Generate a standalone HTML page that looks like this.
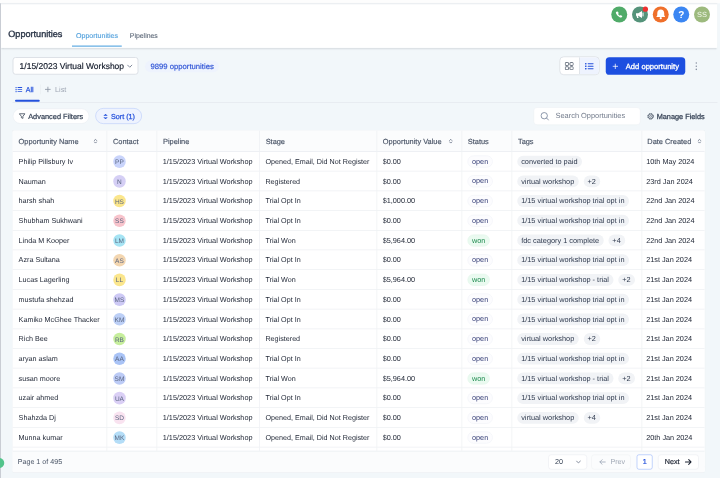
<!DOCTYPE html>
<html lang="en"><head><meta charset="utf-8"><title>Opportunities</title>
<style>
*{box-sizing:border-box;margin:0;padding:0}
html,body{width:720px;height:478px;overflow:hidden;background:#f2f7fa}
body{font-family:"Liberation Sans",sans-serif;color:#101828;-webkit-font-smoothing:antialiased;text-rendering:geometricPrecision}
#wc{position:absolute;left:0;top:0;width:720px;height:478px;overflow:hidden;will-change:transform}
#sc{position:absolute;left:0;top:0;width:2880px;height:1912px;transform:scale(.25);transform-origin:0 0}
#app{zoom:4;position:relative;width:720px;height:478px;overflow:hidden;background:#f2f7fa}
.abs{position:absolute}
.topstrip{position:absolute;left:0;top:0;width:720px;height:3.3px;background:#fdfdfd}
.leftbar{position:absolute;left:0;top:3.3px;width:1px;height:475px;background:#c9cdd4}
.hdr{position:absolute;left:1px;top:3.3px;width:716.2px;height:44.4px;background:#fff;border-top:1px solid #e8eaee;box-shadow:0 .8px 1.6px rgba(16,24,40,.15)}
.ic{position:absolute;top:6.4px;width:16px;height:16px;border-radius:50%}
.ic svg{position:absolute;left:0;top:0}
.title{position:absolute;left:8.3px;top:28.2px;font-size:9.1px;line-height:12px;color:#2b3648;-webkit-text-stroke:.35px #2b3648;white-space:nowrap}
.tab1{position:absolute;left:76px;top:30.3px;font-size:7.05px;line-height:10px;color:#4f9fdc;-webkit-text-stroke:.12px #4f9fdc;white-space:nowrap}
.tab1u{position:absolute;left:72px;top:45.6px;width:49.8px;height:1.1px;background:#66aee4}
.tab2{position:absolute;left:129.8px;top:30.5px;font-size:6.9px;line-height:10px;color:#5d6878;-webkit-text-stroke:.1px #5d6878;white-space:nowrap}
.dd{position:absolute;left:12.5px;top:57px;width:126px;height:17.8px;background:#fff;border:1px solid #dde1e7;border-radius:3px}
.dd span{position:absolute;left:6.1px;top:2.3px;font-size:8.49px;line-height:11px;color:#101828;-webkit-text-stroke:.15px #101828;white-space:nowrap}
.badge{position:absolute;left:145px;top:60.5px;width:74px;height:11.8px;border-radius:6px;background:#eef3fd}
.badge span{position:absolute;left:5.5px;top:1.4px;font-size:7.69px;line-height:9px;color:#2c51d6;-webkit-text-stroke:.15px #2c51d6;white-space:nowrap}
.tog{position:absolute;left:559.2px;top:56.3px;width:40.6px;height:18.9px;border:1px solid #e0e4e9;border-radius:4.5px;background:#fff;overflow:hidden}
.tog .r{position:absolute;left:18.9px;top:0;width:20px;height:17px;background:#eef3fe;border-left:1px solid #e0e4e9}
.addb{position:absolute;left:605.8px;top:57.3px;width:79.5px;height:17.5px;border-radius:3.6px;background:#1d4fe0}
.addb span{position:absolute;left:20px;top:4.6px;font-size:7.59px;line-height:9px;color:#fff;-webkit-text-stroke:.3px #fff;white-space:nowrap}
.t-all{position:absolute;left:25.8px;top:84.8px;font-size:7.01px;line-height:9px;color:#2451dc;-webkit-text-stroke:.25px #2451dc;white-space:nowrap}
.t-allu{position:absolute;left:15px;top:99.7px;width:24.7px;height:2.1px;background:#2451dc;border-radius:1px}
.t-sep{position:absolute;left:40.4px;top:84.6px;width:.7px;height:9.6px;background:#e6eaef}
.t-list{position:absolute;left:55px;top:85px;font-size:7.25px;line-height:9px;color:#a0a8b5;white-space:nowrap}
.hline{position:absolute;left:12.5px;top:102.1px;width:705px;height:.8px;background:#e8ecf1}
.advf{position:absolute;left:12.8px;top:108.4px;width:76.5px;height:15.3px;border-radius:7.7px;background:#fff;border:.7px solid #e7ebf0}
.advf span{position:absolute;left:14.9px;top:3.4px;font-size:7.38px;line-height:9px;color:#344054;-webkit-text-stroke:.2px #344054;white-space:nowrap}
.sortb{position:absolute;left:95.2px;top:108px;width:46.7px;height:16px;border-radius:8px;background:#eef3fe;border:.8px solid #c4d4fb}
.sortb span{position:absolute;left:15px;top:3.2px;font-size:7.2px;line-height:9px;color:#2451dc;-webkit-text-stroke:.25px #2451dc;white-space:nowrap}
.search{position:absolute;left:533.5px;top:107.3px;width:107.1px;height:17.7px;border-radius:3.5px;background:#fff;border:.6px solid #ebeef2}
.search span{position:absolute;left:21.5px;top:3.8px;font-size:7.42px;line-height:9px;color:#737c8c;white-space:nowrap}
.mng{position:absolute;left:656.7px;top:111.7px;font-size:7.32px;line-height:9px;color:#344054;-webkit-text-stroke:.25px #344054;white-space:nowrap}
/* table */
.tbl{position:absolute;left:12.5px;top:130.6px;width:692.2px;height:341.6px;background:#fff;overflow:hidden;border-radius:1.5px;box-shadow:0 0 0 .4px #e9edf1}
.thead{position:absolute;left:0;top:0;width:100%;height:21.2px;background:#fbfcfd;border-bottom:.8px solid #eaedf1}
.th{position:absolute;top:0;height:21.2px;border-left:.8px solid #eef0f3;padding-left:5.6px;font-size:7.4px;line-height:21.4px;color:#4a5567;-webkit-text-stroke:.15px #4a5567;white-space:nowrap}
.th.c0{border-left:none;padding-left:6.1px}
.th .srt{position:absolute;top:8px}
.th.c0 .srt{left:81px}
.th.c4 .srt{left:71.5px}
.th.c7 .srt{left:55.3px}
.tr{position:absolute;left:0;width:100%;height:19.71px;border-bottom:.8px solid #eef0f3}
.td{position:absolute;top:0;height:19.71px;border-left:.8px solid #eff1f4;padding-left:5.4px;font-size:7.3px;line-height:19.9px;color:#1d2433;white-space:nowrap;overflow:hidden}
.td.c0{border-left:none;padding-left:6.1px}
.td.c3{font-size:7.17px}
.td.c0{font-size:7.2px}
.av{position:absolute;left:5.8px;top:3.55px;width:12.6px;height:12.6px;border-radius:50%;font-size:6.5px;line-height:13px;text-align:center;color:#5a6680}
.st{position:absolute;left:5.3px;top:3.8px;height:12px;width:25.1px;border-radius:6px;border:.7px solid #eff1f6;background:#fcfcfe;font-size:7.28px;line-height:10.6px;text-align:center;color:#3a437a}
.st.won{background:#eafaf0;border-color:#e0f5e8;color:#1d8a4e;width:22.3px}
.tag{display:inline-block;vertical-align:top;margin-top:3.9px;margin-right:4.9px;height:11.8px;padding:0 4.5px 0 3.8px;border-radius:6px;background:#f1f3f6;font-size:7.35px;line-height:11.6px;color:#2f3a4e}
.td.c6{padding-left:5px}
.td.c7{padding-left:3.9px}
.th.c7{padding-left:5.1px}
.foot{position:absolute;left:0;top:320.1px;width:100%;height:21.5px;background:#fbfcfd;border-top:.8px solid #eaedf1}
.foot .pg{position:absolute;left:5.2px;top:5.5px;font-size:7.13px;line-height:9px;color:#4a5567;white-space:nowrap}
.pb{position:absolute;top:3.1px;height:15px;border:.7px solid #e6e9ee;border-radius:3px;background:#fff;font-size:7.2px;line-height:13.5px;color:#344054;white-space:nowrap}

</style></head>
<body>
<div id="wc"><div id="sc"><div id="app">
<div class="topstrip"></div>
<div class="hdr"></div>
<div class="leftbar"></div>
<!-- top right icons -->
<div class="ic" style="left:611.200px;background:#50ab69"><svg width="16" height="16" viewBox="0 0 16 16"><path transform="translate(8 8.200) scale(.8) translate(-8 -8)" d="M5.3 4.2c.3-.3.8-.3 1 .1l.8 1.300c.2.300.1.700-.1.900l-.5.500c.5 1 1.300 1.800 2.300 2.300l.5-.5c.2-.2.600-.3.900-.1l1.300.800c.4.200.4.700.1 1l-.6.600c-.5.500-1.300.600-2 .3-2.300-1-4.100-2.800-5.100-5.100-.3-.700-.2-1.500.3-2z" fill="#fff"/></svg></div>
<div class="ic" style="left:632px;background:#55937a"><svg width="16" height="16" viewBox="0 0 16 16"><path d="M4 6.700h2.200l3.800-2.200v7l-3.800-2.200h-.2l.6 2.300h-1.500l-.6-2.300h-.5z" fill="#fff"/><path d="M11 6.500v3" stroke="#fff" stroke-width="1" stroke-linecap="round"/></svg></div>
<div class="abs" style="left:642.700px;top:6.600px;width:5.200px;height:5.200px;border-radius:50%;background:#ee3030"></div>
<div class="ic" style="left:652.7px;background:#ef6f2a"><svg width="16" height="16" viewBox="0 0 16 16"><g transform="translate(8 7.800) scale(1.120) translate(-8 -7.800)"><path d="M8 3.600c-1.900 0-3.100 1.400-3.100 3.200v1.900l-.9 1.500h8l-.9-1.500v-1.900c0-1.800-1.200-3.200-3.100-3.200z" fill="#fff"/><circle cx="8" cy="11.300" r="1" fill="#fff"/></g></svg></div>
<div class="ic" style="left:673.3px;background:#3b86f2"><span style="position:absolute;left:0;top:0;width:16px;text-align:center;font-size:10px;line-height:16px;font-weight:bold;color:#fff">?</span></div>
<div class="ic" style="left:694px;background:#9dba7e"><span style="position:absolute;left:0;top:0;width:16px;text-align:center;font-size:7.400px;line-height:16.200px;color:#f4f8ee">SS</span></div>
<!-- title + tabs -->
<div class="title">Opportunities</div>
<div class="tab1">Opportunities</div>
<div class="tab1u"></div>
<div class="tab2">Pipelines</div>
<!-- toolbar row -->
<div class="dd"><span>1/15/2023 Virtual Workshop</span><svg class="abs" style="left:113.300px;top:6.3px" width="6" height="4" viewBox="0 0 6 4"><path d="M.8.800 3 3 5.200.800" fill="none" stroke="#667085" stroke-width=".8" stroke-linecap="round" stroke-linejoin="round"/></svg></div>
<div class="badge"><span>9899 opportunities</span></div>
<div class="tog"><div class="r"></div>
<svg class="abs" style="left:4.600px;top:4.600px" width="9" height="8.200" viewBox="0 0 17 17" preserveAspectRatio="none"><g fill="none" stroke="#566170" stroke-width="1.700"><rect x="1" y="1" width="6.200" height="6.200" rx="1.400"/><rect x="9.800" y="1" width="6.200" height="6.200" rx="1.400"/><rect x="1" y="9.800" width="6.200" height="6.200" rx="1.400"/><rect x="9.800" y="9.800" width="6.200" height="6.200" rx="1.400"/></g></svg>
<svg class="abs" style="left:24.800px;top:5.300px" width="8.800" height="7.400" viewBox="0 0 17 15" preserveAspectRatio="none"><g fill="#2451dc"><rect x="0" y="1" width="3" height="3" rx=".8"/><rect x="0" y="6" width="3" height="3" rx=".8"/><rect x="0" y="11" width="3" height="3" rx=".8"/><rect x="5" y="1.500" width="12" height="2" rx="1"/><rect x="5" y="6.500" width="12" height="2" rx="1"/><rect x="5" y="11.500" width="12" height="2" rx="1"/></g></svg>
</div>
<div class="addb"><svg class="abs" style="left:6.700px;top:6.200px" width="5.600" height="5.600" viewBox="0 0 8 8"><path d="M4 .5v7M.5 4h7" stroke="#fff" stroke-width="1.100" stroke-linecap="round"/></svg><span>Add opportunity</span></div>
<svg class="abs" style="left:695.300px;top:62px" width="2" height="8.400" viewBox="0 0 2 8.400"><g fill="#8a93a3"><circle cx="1" cy="1" r=".8"/><circle cx="1" cy="4.200" r=".8"/><circle cx="1" cy="7.400" r=".8"/></g></svg>
<!-- view tabs -->
<svg class="abs" style="left:15.200px;top:86.500px" width="7.300" height="6.200" viewBox="0 0 17 15"><g fill="#2451dc"><rect x="0" y="1" width="3" height="3" rx=".8"/><rect x="0" y="6" width="3" height="3" rx=".8"/><rect x="0" y="11" width="3" height="3" rx=".8"/><rect x="5" y="1.500" width="12" height="2" rx="1"/><rect x="5" y="6.500" width="12" height="2" rx="1"/><rect x="5" y="11.500" width="12" height="2" rx="1"/></g></svg>
<div class="t-all">All</div>
<div class="hline"></div>
<div class="t-allu"></div>
<div class="t-sep"></div>
<svg class="abs" style="left:45px;top:86.600px" width="5.800" height="5.800" viewBox="0 0 8 8"><path d="M4 .5v7M.5 4h7" stroke="#8d96a5" stroke-width="1.150" stroke-linecap="round"/></svg>
<div class="t-list">List</div>
<!-- filter row -->
<div class="advf"><svg class="abs" style="left:5.400px;top:4.200px" width="6.800" height="6.200" viewBox="0 0 14 12"><path d="M1.200 1.200H12.800L8.600 6.400V10.700L5.400 9.300V6.400z" fill="none" stroke="#414c5e" stroke-width="1.700" stroke-linejoin="round"/></svg><span>Advanced Filters</span></div>
<div class="sortb"><svg class="abs" style="left:7.200px;top:4.400px" width="4.600" height="6.600" viewBox="0 0 6 9"><path d="M1 3.300 3 1.300 5 3.300M1 5.700 3 7.700 5 5.700" fill="#2451dc" stroke="#2451dc" stroke-width="1.300" stroke-linecap="round" stroke-linejoin="round"/></svg><span>Sort (1)</span></div>
<div class="search"><svg class="abs" style="left:6.300px;top:4px" width="9" height="9" viewBox="0 0 17 17"><circle cx="7.500" cy="7.500" r="6" fill="none" stroke="#6f7d95" stroke-width="1.500"/><path d="M12 12l4 4" stroke="#6f7d95" stroke-width="1.500" stroke-linecap="round"/></svg><span>Search Opportunities</span></div>
<svg class="abs" style="left:647.100px;top:112.800px" width="7.200" height="7.200" viewBox="0 0 12 12"><circle cx="6" cy="6" r="4.700" fill="none" stroke="#465264" stroke-width="1.400" stroke-dasharray="2.400 1.290"/><circle cx="6" cy="6" r="3.900" fill="none" stroke="#465264" stroke-width="1.100"/><circle cx="6" cy="6" r="1.600" fill="none" stroke="#465264" stroke-width="1"/></svg>
<div class="mng">Manage Fields</div>
<div class="abs" style="left:-5.800px;top:457.900px;width:10px;height:10px;border-radius:50%;background:#52c48b"></div>
<div class="tbl">
<div class="thead"><div class="th c0" style="left:0.0px;width:94.1px"><span>Opportunity Name</span><svg class="srt" viewBox="0 0 6 8" width="4" height="5.400"><path d="M1.2 3 L3 1.2 L4.8 3 M1.2 5 L3 6.800 L4.800 5" fill="none" stroke="#6b7588" stroke-width="1.300" stroke-linecap="round" stroke-linejoin="round"/></svg></div><div class="th c1" style="left:94.1px;width:50.0px"><span>Contact</span></div><div class="th c2" style="left:144.1px;width:102.7px"><span>Pipeline</span></div><div class="th c3" style="left:246.8px;width:117.2px"><span>Stage</span></div><div class="th c4" style="left:364.0px;width:85.0px"><span>Opportunity Value</span><svg class="srt" viewBox="0 0 6 8" width="4" height="5.400"><path d="M1.2 3 L3 1.2 L4.8 3 M1.2 5 L3 6.800 L4.800 5" fill="none" stroke="#6b7588" stroke-width="1.300" stroke-linecap="round" stroke-linejoin="round"/></svg></div><div class="th c5" style="left:449.0px;width:50.1px"><span>Status</span></div><div class="th c6" style="left:499.1px;width:129.9px"><span>Tags</span></div><div class="th c7" style="left:629.0px;width:63.2px"><span>Date Created</span><svg class="srt" viewBox="0 0 6 8" width="4" height="5.400"><path d="M1.2 3 L3 1.2 L4.8 3 M1.2 5 L3 6.800 L4.800 5" fill="none" stroke="#6b7588" stroke-width="1.300" stroke-linecap="round" stroke-linejoin="round"/></svg></div></div>
<div class="tr" style="top:21.20px"><div class="td c0" style="left:0.0px;width:94.1px"><span>Philip Pillsbury Iv</span></div><div class="td c1" style="left:94.1px;width:50.0px"><span class="av" style="background:#c9d4fb">PP</span></div><div class="td c2" style="left:144.1px;width:102.7px"><span>1/15/2023 Virtual Workshop</span></div><div class="td c3" style="left:246.8px;width:117.2px"><span>Opened, Email, Did Not Register</span></div><div class="td c4" style="left:364.0px;width:85.0px"><span>$0.00</span></div><div class="td c5" style="left:449.0px;width:50.1px"><span class="st open">open</span></div><div class="td c6" style="left:499.1px;width:129.9px"><span class="tag">converted to paid</span></div><div class="td c7" style="left:629.0px;width:63.2px"><span>10th May 2024</span></div></div>
<div class="tr" style="top:40.91px"><div class="td c0" style="left:0.0px;width:94.1px"><span>Nauman</span></div><div class="td c1" style="left:94.1px;width:50.0px"><span class="av" style="background:#d5cff5">N</span></div><div class="td c2" style="left:144.1px;width:102.7px"><span>1/15/2023 Virtual Workshop</span></div><div class="td c3" style="left:246.8px;width:117.2px"><span>Registered</span></div><div class="td c4" style="left:364.0px;width:85.0px"><span>$0.00</span></div><div class="td c5" style="left:449.0px;width:50.1px"><span class="st open">open</span></div><div class="td c6" style="left:499.1px;width:129.9px"><span class="tag">virtual workshop</span><span class="tag">+2</span></div><div class="td c7" style="left:629.0px;width:63.2px"><span>23rd Jan 2024</span></div></div>
<div class="tr" style="top:60.62px"><div class="td c0" style="left:0.0px;width:94.1px"><span>harsh shah</span></div><div class="td c1" style="left:94.1px;width:50.0px"><span class="av" style="background:#fbe68c">HS</span></div><div class="td c2" style="left:144.1px;width:102.7px"><span>1/15/2023 Virtual Workshop</span></div><div class="td c3" style="left:246.8px;width:117.2px"><span>Trial Opt In</span></div><div class="td c4" style="left:364.0px;width:85.0px"><span>$1,000.00</span></div><div class="td c5" style="left:449.0px;width:50.1px"><span class="st open">open</span></div><div class="td c6" style="left:499.1px;width:129.9px"><span class="tag">1/15 virtual workshop trial opt in</span></div><div class="td c7" style="left:629.0px;width:63.2px"><span>22nd Jan 2024</span></div></div>
<div class="tr" style="top:80.33px"><div class="td c0" style="left:0.0px;width:94.1px"><span>Shubham Sukhwani</span></div><div class="td c1" style="left:94.1px;width:50.0px"><span class="av" style="background:#f8c4cc">SS</span></div><div class="td c2" style="left:144.1px;width:102.7px"><span>1/15/2023 Virtual Workshop</span></div><div class="td c3" style="left:246.8px;width:117.2px"><span>Trial Opt In</span></div><div class="td c4" style="left:364.0px;width:85.0px"><span>$0.00</span></div><div class="td c5" style="left:449.0px;width:50.1px"><span class="st open">open</span></div><div class="td c6" style="left:499.1px;width:129.9px"><span class="tag">1/15 virtual workshop trial opt in</span></div><div class="td c7" style="left:629.0px;width:63.2px"><span>22nd Jan 2024</span></div></div>
<div class="tr" style="top:100.04px"><div class="td c0" style="left:0.0px;width:94.1px"><span>Linda M Kooper</span></div><div class="td c1" style="left:94.1px;width:50.0px"><span class="av" style="background:#a6e4f4">LM</span></div><div class="td c2" style="left:144.1px;width:102.7px"><span>1/15/2023 Virtual Workshop</span></div><div class="td c3" style="left:246.8px;width:117.2px"><span>Trial Won</span></div><div class="td c4" style="left:364.0px;width:85.0px"><span>$5,964.00</span></div><div class="td c5" style="left:449.0px;width:50.1px"><span class="st won">won</span></div><div class="td c6" style="left:499.1px;width:129.9px"><span class="tag">fdc category 1 complete</span><span class="tag">+4</span></div><div class="td c7" style="left:629.0px;width:63.2px"><span>22nd Jan 2024</span></div></div>
<div class="tr" style="top:119.75px"><div class="td c0" style="left:0.0px;width:94.1px"><span>Azra Sultana</span></div><div class="td c1" style="left:94.1px;width:50.0px"><span class="av" style="background:#f3d6b0">AS</span></div><div class="td c2" style="left:144.1px;width:102.7px"><span>1/15/2023 Virtual Workshop</span></div><div class="td c3" style="left:246.8px;width:117.2px"><span>Trial Opt In</span></div><div class="td c4" style="left:364.0px;width:85.0px"><span>$0.00</span></div><div class="td c5" style="left:449.0px;width:50.1px"><span class="st open">open</span></div><div class="td c6" style="left:499.1px;width:129.9px"><span class="tag">1/15 virtual workshop trial opt in</span></div><div class="td c7" style="left:629.0px;width:63.2px"><span>21st Jan 2024</span></div></div>
<div class="tr" style="top:139.46px"><div class="td c0" style="left:0.0px;width:94.1px"><span>Lucas Lagerling</span></div><div class="td c1" style="left:94.1px;width:50.0px"><span class="av" style="background:#fbe68c">LL</span></div><div class="td c2" style="left:144.1px;width:102.7px"><span>1/15/2023 Virtual Workshop</span></div><div class="td c3" style="left:246.8px;width:117.2px"><span>Trial Won</span></div><div class="td c4" style="left:364.0px;width:85.0px"><span>$5,964.00</span></div><div class="td c5" style="left:449.0px;width:50.1px"><span class="st won">won</span></div><div class="td c6" style="left:499.1px;width:129.9px"><span class="tag">1/15 virtual workshop - trial</span><span class="tag">+2</span></div><div class="td c7" style="left:629.0px;width:63.2px"><span>21st Jan 2024</span></div></div>
<div class="tr" style="top:159.17px"><div class="td c0" style="left:0.0px;width:94.1px"><span>mustufa shehzad</span></div><div class="td c1" style="left:94.1px;width:50.0px"><span class="av" style="background:#cdc9f5">MS</span></div><div class="td c2" style="left:144.1px;width:102.7px"><span>1/15/2023 Virtual Workshop</span></div><div class="td c3" style="left:246.8px;width:117.2px"><span>Trial Opt In</span></div><div class="td c4" style="left:364.0px;width:85.0px"><span>$0.00</span></div><div class="td c5" style="left:449.0px;width:50.1px"><span class="st open">open</span></div><div class="td c6" style="left:499.1px;width:129.9px"><span class="tag">1/15 virtual workshop trial opt in</span></div><div class="td c7" style="left:629.0px;width:63.2px"><span>21st Jan 2024</span></div></div>
<div class="tr" style="top:178.88px"><div class="td c0" style="left:0.0px;width:94.1px"><span>Kamiko McGhee Thacker</span></div><div class="td c1" style="left:94.1px;width:50.0px"><span class="av" style="background:#bccff6">KM</span></div><div class="td c2" style="left:144.1px;width:102.7px"><span>1/15/2023 Virtual Workshop</span></div><div class="td c3" style="left:246.8px;width:117.2px"><span>Trial Opt In</span></div><div class="td c4" style="left:364.0px;width:85.0px"><span>$0.00</span></div><div class="td c5" style="left:449.0px;width:50.1px"><span class="st open">open</span></div><div class="td c6" style="left:499.1px;width:129.9px"><span class="tag">1/15 virtual workshop trial opt in</span></div><div class="td c7" style="left:629.0px;width:63.2px"><span>21st Jan 2024</span></div></div>
<div class="tr" style="top:198.59px"><div class="td c0" style="left:0.0px;width:94.1px"><span>Rich Bee</span></div><div class="td c1" style="left:94.1px;width:50.0px"><span class="av" style="background:#c6ee9c">RB</span></div><div class="td c2" style="left:144.1px;width:102.7px"><span>1/15/2023 Virtual Workshop</span></div><div class="td c3" style="left:246.8px;width:117.2px"><span>Registered</span></div><div class="td c4" style="left:364.0px;width:85.0px"><span>$0.00</span></div><div class="td c5" style="left:449.0px;width:50.1px"><span class="st open">open</span></div><div class="td c6" style="left:499.1px;width:129.9px"><span class="tag">virtual workshop</span><span class="tag">+2</span></div><div class="td c7" style="left:629.0px;width:63.2px"><span>21st Jan 2024</span></div></div>
<div class="tr" style="top:218.30px"><div class="td c0" style="left:0.0px;width:94.1px"><span>aryan aslam</span></div><div class="td c1" style="left:94.1px;width:50.0px"><span class="av" style="background:#a9c3f6">AA</span></div><div class="td c2" style="left:144.1px;width:102.7px"><span>1/15/2023 Virtual Workshop</span></div><div class="td c3" style="left:246.8px;width:117.2px"><span>Trial Opt In</span></div><div class="td c4" style="left:364.0px;width:85.0px"><span>$0.00</span></div><div class="td c5" style="left:449.0px;width:50.1px"><span class="st open">open</span></div><div class="td c6" style="left:499.1px;width:129.9px"><span class="tag">1/15 virtual workshop trial opt in</span></div><div class="td c7" style="left:629.0px;width:63.2px"><span>21st Jan 2024</span></div></div>
<div class="tr" style="top:238.01px"><div class="td c0" style="left:0.0px;width:94.1px"><span>susan moore</span></div><div class="td c1" style="left:94.1px;width:50.0px"><span class="av" style="background:#bccbf6">SM</span></div><div class="td c2" style="left:144.1px;width:102.7px"><span>1/15/2023 Virtual Workshop</span></div><div class="td c3" style="left:246.8px;width:117.2px"><span>Trial Won</span></div><div class="td c4" style="left:364.0px;width:85.0px"><span>$5,964.00</span></div><div class="td c5" style="left:449.0px;width:50.1px"><span class="st won">won</span></div><div class="td c6" style="left:499.1px;width:129.9px"><span class="tag">1/15 virtual workshop - trial</span><span class="tag">+2</span></div><div class="td c7" style="left:629.0px;width:63.2px"><span>21st Jan 2024</span></div></div>
<div class="tr" style="top:257.72px"><div class="td c0" style="left:0.0px;width:94.1px"><span>uzair ahmed</span></div><div class="td c1" style="left:94.1px;width:50.0px"><span class="av" style="background:#dacff5">UA</span></div><div class="td c2" style="left:144.1px;width:102.7px"><span>1/15/2023 Virtual Workshop</span></div><div class="td c3" style="left:246.8px;width:117.2px"><span>Trial Opt In</span></div><div class="td c4" style="left:364.0px;width:85.0px"><span>$0.00</span></div><div class="td c5" style="left:449.0px;width:50.1px"><span class="st open">open</span></div><div class="td c6" style="left:499.1px;width:129.9px"><span class="tag">1/15 virtual workshop trial opt in</span></div><div class="td c7" style="left:629.0px;width:63.2px"><span>21st Jan 2024</span></div></div>
<div class="tr" style="top:277.43px"><div class="td c0" style="left:0.0px;width:94.1px"><span>Shahzda Dj</span></div><div class="td c1" style="left:94.1px;width:50.0px"><span class="av" style="background:#f9e3f0">SD</span></div><div class="td c2" style="left:144.1px;width:102.7px"><span>1/15/2023 Virtual Workshop</span></div><div class="td c3" style="left:246.8px;width:117.2px"><span>Opened, Email, Did Not Register</span></div><div class="td c4" style="left:364.0px;width:85.0px"><span>$0.00</span></div><div class="td c5" style="left:449.0px;width:50.1px"><span class="st open">open</span></div><div class="td c6" style="left:499.1px;width:129.9px"><span class="tag">virtual workshop</span><span class="tag">+4</span></div><div class="td c7" style="left:629.0px;width:63.2px"><span>21st Jan 2024</span></div></div>
<div class="tr" style="top:297.14px"><div class="td c0" style="left:0.0px;width:94.1px"><span>Munna kumar</span></div><div class="td c1" style="left:94.1px;width:50.0px"><span class="av" style="background:#b4ddf7">MK</span></div><div class="td c2" style="left:144.1px;width:102.7px"><span>1/15/2023 Virtual Workshop</span></div><div class="td c3" style="left:246.8px;width:117.2px"><span>Opened, Email, Did Not Register</span></div><div class="td c4" style="left:364.0px;width:85.0px"><span>$0.00</span></div><div class="td c5" style="left:449.0px;width:50.1px"><span class="st open">open</span></div><div class="td c6" style="left:499.1px;width:129.9px"></div><div class="td c7" style="left:629.0px;width:63.2px"><span>20th Jan 2024</span></div></div>
<div class="tr part" style="top:316.85px"><div class="td c0" style="left:0.0px;width:94.1px"></div><div class="td c1" style="left:94.1px;width:50.0px"></div><div class="td c2" style="left:144.1px;width:102.7px"></div><div class="td c3" style="left:246.8px;width:117.2px"></div><div class="td c4" style="left:364.0px;width:85.0px"></div><div class="td c5" style="left:449.0px;width:50.1px"></div><div class="td c6" style="left:499.1px;width:129.9px"></div><div class="td c7" style="left:629.0px;width:63.2px"></div></div>
<div class="foot"><span class="pg">Page 1 of 495</span>
<div class="pb" style="left:535.8px;width:38.700px"><span class="abs" style="left:6.200px;top:0">20</span><svg class="abs" style="left:27px;top:5.200px" width="5.400" height="3.600" viewBox="0 0 6 4"><path d="M.8.800 3 3 5.200.800" fill="none" stroke="#667085" stroke-width=".9" stroke-linecap="round" stroke-linejoin="round"/></svg></div>
<div class="pb" style="left:578.800px;width:39.500px;color:#a0a8b5;border-color:#eef0f3;background:#fbfcfd"><svg class="abs" style="left:7.500px;top:4px" width="6.600" height="6" viewBox="0 0 11 10"><path d="M10 5H1M4.800 1.200 1 5l3.800 3.800" fill="none" stroke="#98a2b3" stroke-width="1.300" stroke-linecap="round" stroke-linejoin="round"/></svg><span class="abs" style="left:18.600px;top:0">Prev</span></div>
<div class="pb" style="left:624.300px;width:15.700px;border-color:#86a8f8;border-radius:2.200px;color:#2451dc;-webkit-text-stroke:.2px #2451dc;text-align:center">1</div>
<div class="pb" style="left:645.500px;width:40.800px;color:#1d2433"><span class="abs" style="left:6.300px;top:0;-webkit-text-stroke:.2px #1d2433">Next</span><svg class="abs" style="left:26.300px;top:3.800px" width="7" height="6.400" viewBox="0 0 11 10"><path d="M1 5h9M6.200 1.200 10 5 6.200 8.800" fill="none" stroke="#1d2433" stroke-width="1.650" stroke-linecap="round" stroke-linejoin="round"/></svg></div>
</div>
<div class="abs" style="display:none"></div>
</div>
</div></div></div>
</body></html>
